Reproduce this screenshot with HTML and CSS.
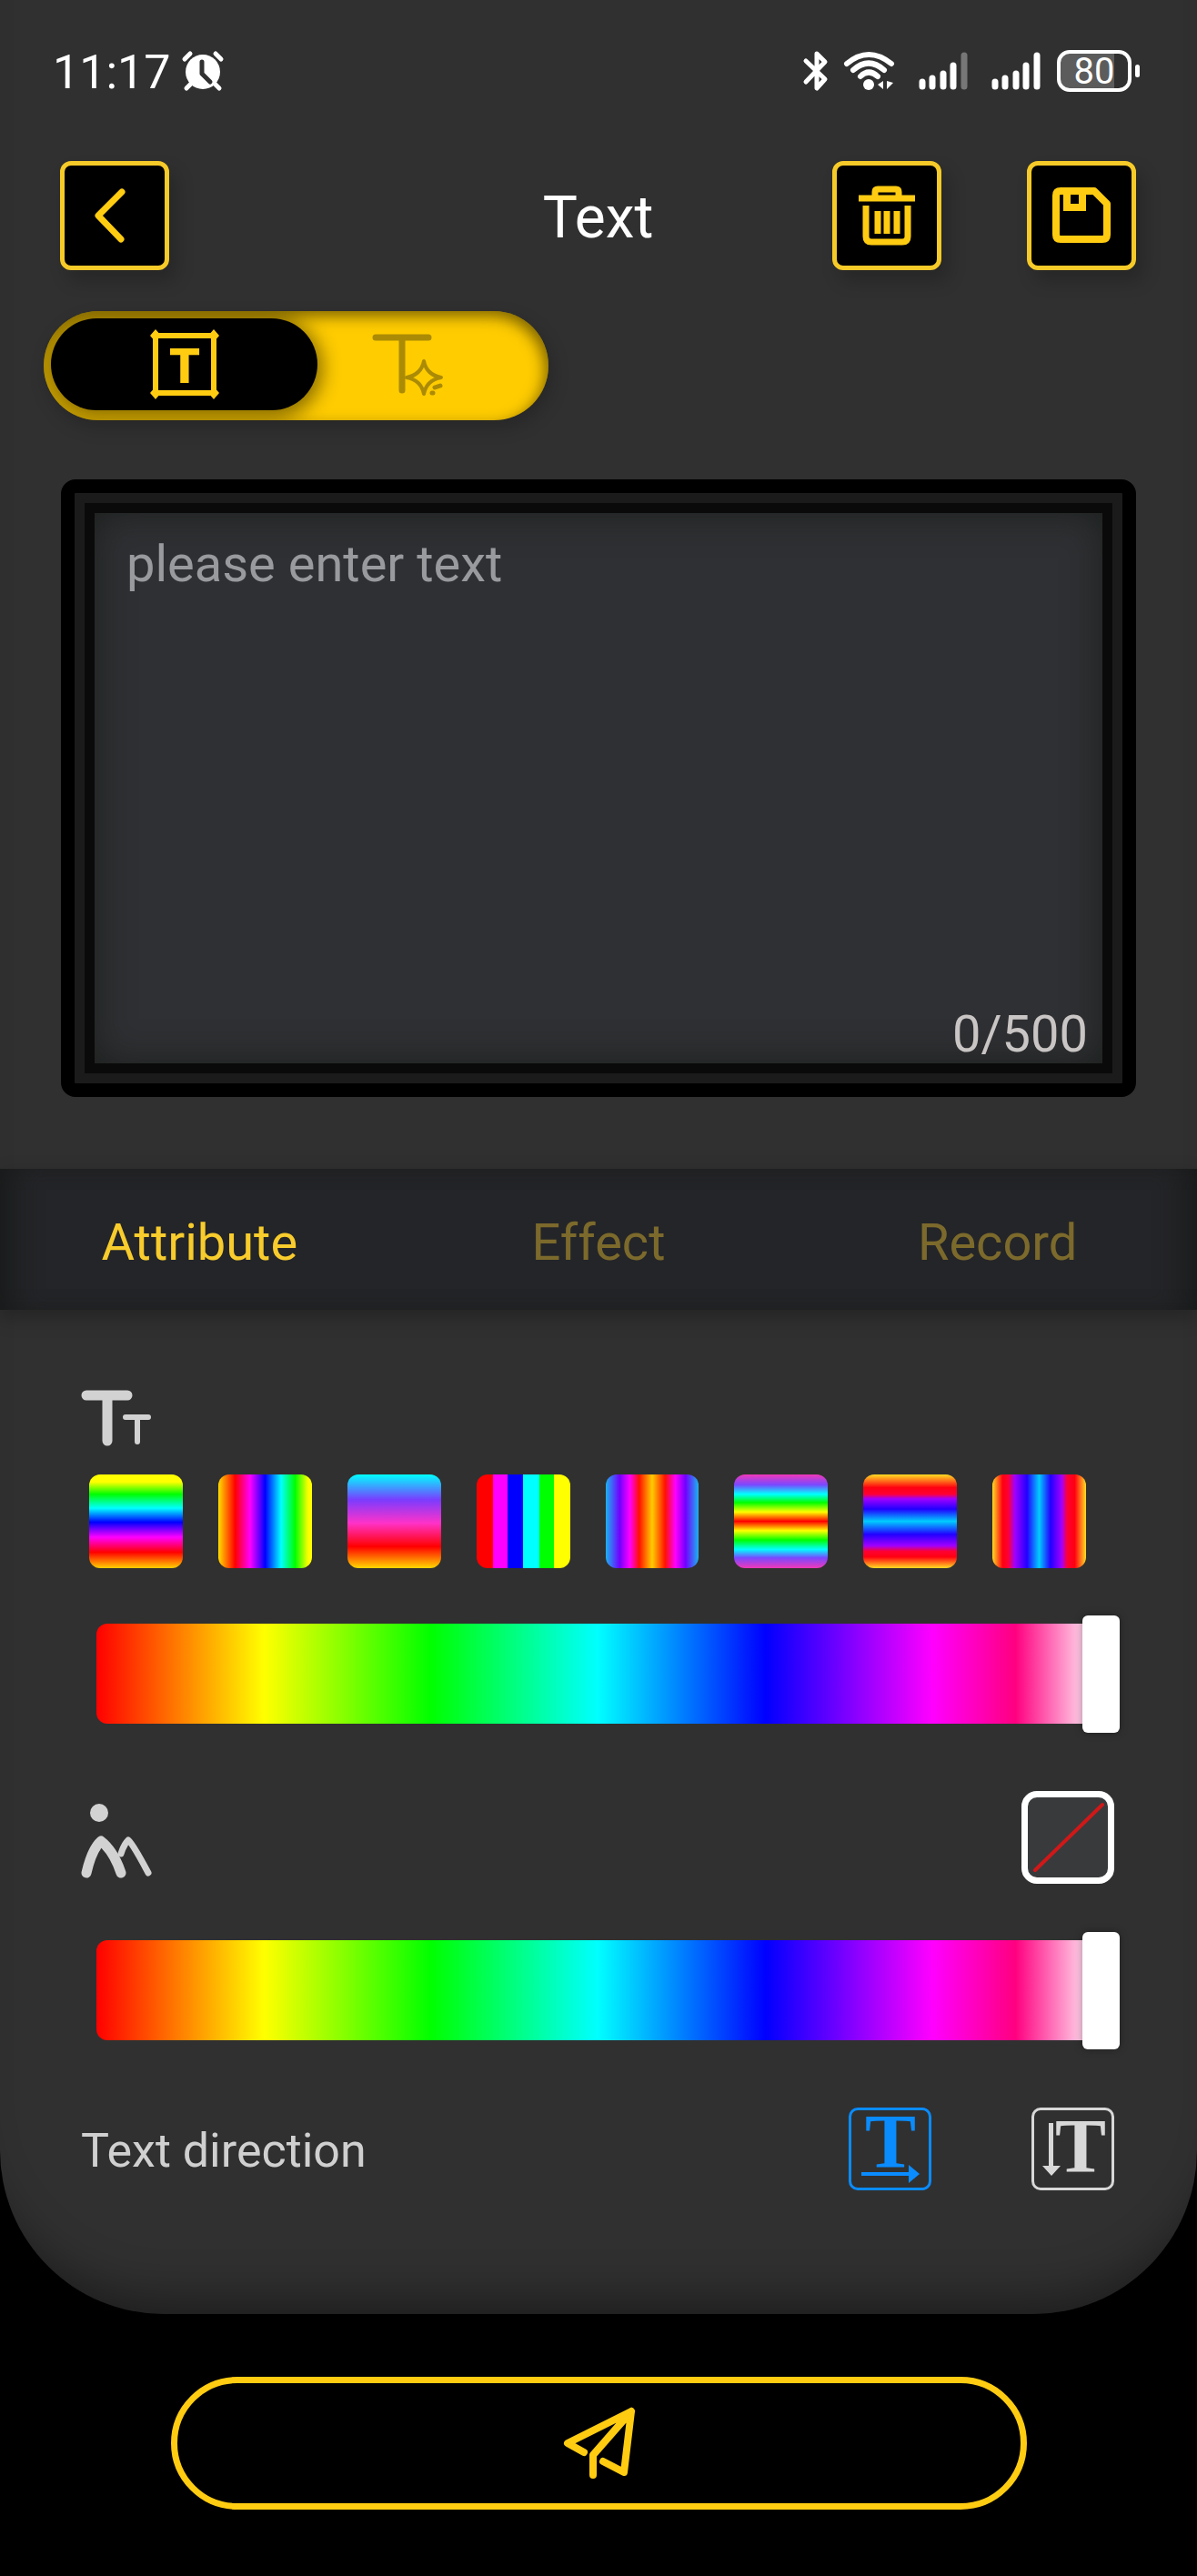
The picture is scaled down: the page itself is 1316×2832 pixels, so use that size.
FILE: index.html
```html
<!DOCTYPE html>
<html lang="en">
<head>
  <meta charset="UTF-8">
  <meta name="viewport" content="width=device-width, initial-scale=1">
  <title>Text</title>
  <link rel="stylesheet" href="styles.css">
</head>
<body>
  <main class="screen">
    <div class="status-bar">
      <div class="status-left">
        <span class="time">11:17</span>
        <svg width="46" height="44" viewBox="0 0 46 44">
          <circle cx="23" cy="23" r="19" fill="#fff"/>
          <path d="M3 9l6-6M43 9l-6-6M10 36l-5 5M36 36l5 5" stroke="#fff" stroke-width="5" stroke-linecap="round"/>
          <path d="M22 12v13l9 9" fill="none" stroke="#303030" stroke-width="5" stroke-linecap="round" stroke-linejoin="round"/>
        </svg>
      </div>
      <div class="status-right">
        <svg class="bluetooth" width="28" height="44" viewBox="0 0 28 44" fill="none" stroke="#fff" stroke-width="5" stroke-linecap="round" stroke-linejoin="round">
          <path d="M3 11l21 20-9 10V3l9 9L3 34"/>
        </svg>
        <svg class="wifi" width="56" height="44" viewBox="0 0 56 44" fill="none" stroke="#fff" stroke-width="6" stroke-linecap="round">
          <path d="M3 14Q27-6 52 14M10 21Q27 6 44 21M18 28Q27 19 37 28"/>
          <circle cx="27" cy="37" r="6" fill="#fff" stroke="none"/>
          <path d="M43 33v9l-6-5zM47 33v9l7-7z" fill="#fff" stroke="none"/>
        </svg>
        <svg class="signal" width="54" height="44" viewBox="0 0 54 44" stroke="#fff" stroke-width="7" stroke-linecap="round">
          <path d="M4 34v5M15 30v9M27 25v14M38 16v23"/>
          <path d="M50 5v34" stroke="#777"/>
        </svg>
        <svg class="signal" width="54" height="44" viewBox="0 0 54 44" stroke="#fff" stroke-width="7" stroke-linecap="round">
          <path d="M4 34v5M15 30v9M27 25v14M38 16v23M50 5v34"/>
        </svg>
        <div class="battery"><span>80</span></div>
      </div>
    </div>

    <header class="header">
      <button class="icon-btn" aria-label="Back">
        <svg width="112" height="112" viewBox="0 0 112 112" fill="none" stroke="#ffcc12" stroke-width="7" stroke-linecap="round" stroke-linejoin="round">
          <path d="M64 30L38 56l25 26"/>
        </svg>
      </button>
      <h1>Text</h1>
      <div class="header-actions">
        <button class="icon-btn" aria-label="Delete">
          <svg width="62" height="66" viewBox="0 0 62 66" fill="none" stroke="#ffcc12" stroke-width="7">
            <path d="M0 14h62M18 14V7q0-3 3-3h20q3 0 3 3v7M8 22v34q0 6 6 6h34q6 0 6-6V22M21 28v25M31 28v25M42 28v25"/>
          </svg>
        </button>
        <button class="icon-btn" aria-label="Save">
          <svg width="64" height="62" viewBox="0 0 64 62" fill="none" stroke="#ffcc12" stroke-width="8" stroke-linejoin="round">
            <path d="M9 4h37l14 14v34q0 5-5 5H9q-5 0-5-5V9q0-5 5-5z"/>
            <path d="M16 4v18h17V4" stroke-linejoin="miter"/>
          </svg>
        </button>
      </div>
    </header>

    <div class="mode-switch">
      <button class="mode active" aria-label="Plain text">
        <svg width="76" height="78" viewBox="0 0 76 78">
          <path d="M6 7h64v63H6z" fill="none" stroke="#ffcc12" stroke-width="6"/>
          <path d="M6 0l6 7-6 7-6-7zM70 0l6 7-6 7-6-7zM6 63l6 7-6 7-6-7zM70 63l6 7-6 7-6-7z" fill="#ffcc12"/>
          <text class="box-letter" x="38" y="59">T</text>
        </svg>
      </button>
      <button class="mode" aria-label="Art text">
        <svg width="80" height="72" viewBox="0 0 80 72" fill="none" stroke="#ab8b05" stroke-width="7" stroke-linecap="round" stroke-linejoin="round">
          <path d="M4 5h58M33 5v58"/>
          <path d="M57 31q3 15 19 18-16 3-19 18-3-15-19-18 16-3 19-18z" fill="#ffcc00" stroke-width="4"/>
          <path d="M69 60l6-2M66 66h1" stroke-width="5"/>
        </svg>
      </button>
    </div>

    <div class="editor">
      <textarea id="content" maxlength="500" placeholder="please enter text" aria-label="Text content"></textarea>
      <span class="counter">0/500</span>
    </div>

    <nav class="tabs">
      <button class="tab active">Attribute</button>
      <button class="tab">Effect</button>
      <button class="tab">Record</button>
    </nav>

    <section class="panel">
      <svg class="font-icon" width="78" height="62" viewBox="0 0 78 62" fill="none" stroke="#d2d2d2" stroke-linecap="round">
        <path d="M6 6h45M29 6v50" stroke-width="11"/>
        <path d="M49 30h25M62 30v27" stroke-width="6"/>
      </svg>

      <div class="swatches">
        <button class="swatch rainbow-down" aria-label="Rainbow down"></button>
        <button class="swatch rainbow-across" aria-label="Rainbow across"></button>
        <button class="swatch sunset" aria-label="Sunset"></button>
        <button class="swatch bars" aria-label="Colour bars"></button>
        <button class="swatch gold-centre" aria-label="Gold centre"></button>
        <button class="swatch red-centre" aria-label="Red centre"></button>
        <button class="swatch blue-down" aria-label="Blue centre down"></button>
        <button class="swatch blue-across" aria-label="Blue centre across"></button>
      </div>

      <input class="hue" type="range" min="0" max="100" value="100" aria-label="Text colour">

      <div class="row background-row">
        <svg width="78" height="94" viewBox="0 0 78 94" fill="none" stroke="#d2d2d2" stroke-linecap="round" stroke-linejoin="round">
          <circle cx="20" cy="20" r="10" fill="#d2d2d2" stroke="none"/>
          <path d="M6 86Q12 60 22 51 36 62 44 86" stroke-width="11"/>
          <path d="M44 65q3-10 8-15 5 4 22 36" stroke-width="7"/>
        </svg>
        <button class="no-color" aria-label="No background">
          <svg width="88" height="88" viewBox="0 0 88 88"><path d="M8 80L82 8" stroke="#d01818" stroke-width="4" stroke-linecap="round"/></svg>
        </button>
      </div>

      <input class="hue" type="range" min="0" max="100" value="100" aria-label="Background colour">

      <div class="row direction-row">
        <span class="label">Text direction</span>
        <div class="directions">
          <button class="direction active" aria-label="Horizontal">
            <svg width="91" height="91" viewBox="0 0 91 91" fill="currentColor">
              <text class="serif-letter" x="46" y="66">T</text>
              <path d="M14 71h52v-8l12 10-12 10v-8H14z"/>
            </svg>
          </button>
          <button class="direction" aria-label="Vertical">
            <svg width="91" height="91" viewBox="0 0 91 91" fill="currentColor">
              <text class="serif-letter" x="54" y="71">T</text>
              <path d="M19 17h5v47h8L22 75 12 64h7z"/>
            </svg>
          </button>
        </div>
      </div>
    </section>
  </main>

  <footer class="footer">
    <button class="send" aria-label="Send">
      <svg width="80" height="80" viewBox="0 0 80 80" fill="none" stroke="#ffcc12" stroke-width="8" stroke-linecap="round" stroke-linejoin="round">
        <path d="M23 50L5 40 75 5l-8 67-23-12M75 5L33 53v22"/>
      </svg>
    </button>
  </footer>
</body>
</html>
```
FILE: styles.css
```css
*{box-sizing:border-box;}
body{margin:0;min-height:100vh;background:#000;color:#fff;font-family:Roboto,"Noto Sans",sans-serif;}
button{margin:0;padding:0;border:none;background:none;font:inherit;cursor:pointer;}
svg{display:block;overflow:visible;}

.screen{
  background:#303030;
  border-radius:0 0 180px 180px;
  box-shadow:inset 0 -56px 50px -40px rgba(0,0,0,0.4);
  overflow:hidden;
}

/* status bar */
.status-bar{display:flex;justify-content:space-between;align-items:center;height:46px;margin:55px 63px 76px 58px;}
.status-left,.status-right{display:flex;align-items:center;}
.status-left{gap:12px;}
.time{padding-top:4px;font-size:52px;line-height:46px;}
.wifi{margin-left:17px;}
.signal{margin-left:26px;}
.battery{
  position:relative;
  width:82px;
  height:46px;
  margin:0 9px 0 18px;
  border:4px solid #fff;
  border-radius:14px;
  background:linear-gradient(90deg,#5c5c5c 80%,#303030 80%);
  font-size:40px;
  line-height:40px;
  text-align:center;
}
.battery::after{content:"";position:absolute;right:-13px;top:12px;width:5px;height:14px;border-radius:3px;background:#fff;}

/* header */
.header{display:grid;grid-template-columns:1fr auto 1fr;align-items:center;margin:0 67px 0 66px;}
.header h1{margin:0;padding-top:6px;font-size:64px;font-weight:400;line-height:72px;}
.header-actions{display:flex;justify-content:flex-end;gap:94px;}
.icon-btn{
  display:flex;
  align-items:center;
  justify-content:center;
  width:120px;
  height:120px;
  border:5px solid #f6ca28;
  border-radius:12px;
  background:#000;
  box-shadow:8px 12px 20px rgba(0,0,0,0.2);
}

.mode-switch{
  display:flex;
  width:555px;
  height:120px;
  margin:45px 48px 65px;
  padding:8px;
  border-radius:60px;
  background:#ffcc00;
  box-shadow:inset -4px 6px 16px rgba(0,0,0,0.5),4px 8px 20px rgba(0,0,0,0.2);
  overflow:hidden;
}
.mode{display:flex;align-items:center;justify-content:center;width:200px;}
.mode.active{width:293px;height:101px;border-radius:51px;background:#000;box-shadow:0 4px 20px 6px rgba(0,0,0,0.45);}
.box-letter{fill:#ffcc12;font-size:54px;font-weight:900;text-anchor:middle;}

/* editor */
.editor{
  position:relative;
  margin:0 67px;
  border:15px solid #000;
  border-radius:16px;
  background:#1b1b1b;
  padding:11px;
}
.editor textarea{
  display:block;
  width:100%;
  height:627px;
  padding:20px 35px;
  border:11px solid #0a0a0a;
  background:#2f3033;
  box-shadow:inset 0 0 40px rgba(20,24,20,0.7);
  color:#fff;
  font:56px/72px Roboto,"Noto Sans",sans-serif;
  resize:none;
  outline:none;
}
.editor textarea::placeholder{color:#999a9d;opacity:1;}
.counter{position:absolute;right:38px;bottom:22px;color:#c9c5c4;font-size:56px;line-height:64px;}

/* tabs */
.tabs{
  display:grid;
  grid-template-columns:repeat(3, 1fr);
  margin-top:79px;
  background:#242528;
  box-shadow:inset 28px 0 32px -16px #181a1a,inset -28px 0 32px -16px #181a1a,0 8px 20px rgba(0,0,0,0.25);
}
.tab{height:155px;padding-top:6px;color:#7c6a2c;font-size:56px;line-height:72px;}
.tab.active{color:#f8cc2c;}

/* attribute panel */
.panel{padding:88px 91px 136px 89px;}
.row{display:flex;align-items:center;justify-content:space-between;}
.swatches{display:grid;grid-template-columns:repeat(8, 1fr);gap:39px;margin:31px 31px 52px 9px;}
.swatch{aspect-ratio:1;border-radius:12px;}
.rainbow-down{background:linear-gradient(#ff0 8%,#0f0 21%,#0ff 36%,#00f 51%,#f0f 67%,#f00 83%,#ffd000);}
.rainbow-across{background:linear-gradient(90deg,#fd0,#f00 18%,#f0f 34%,#00f 50%,#0ff 67%,#0f0 82%,#ff0 96%);}
.sunset{background:linear-gradient(#0ff,#7a3cff 27%,#ff32c8 52%,#f00 77%,#ffd800);}
.bars{background:linear-gradient(90deg,#f00 17%,#f0f 17% 33%,#00f 33% 50%,#0ff 50% 67%,#0f0 67% 83%,#ff0 83%);}
.gold-centre{background:linear-gradient(90deg,#1ab4f0,#7000ff 15%,#f0f 26%,#f10 36%,#fc0 50%,#f10 64%,#f0f 75%,#7000ff 86%,#1ab4f0);}
.red-centre{background:linear-gradient(#f038b8,#7a48ff 11%,#0ff 21%,#0f0 30%,#ff0 40%,#f00 50%,#ff0 60%,#0f0 70%,#0ff 80%,#7a48ff 89%,#f038b8);}
.blue-down{background:linear-gradient(#fd2,#f01 14%,#f03 21%,#a000ff 26%,#20f 37%,#0cf 50%,#20f 64%,#a000ff 76%,#f03 82%,#f01 88%,#fd2);}
.blue-across{background:linear-gradient(90deg,#fd2,#f01 11%,#f03 17%,#a000ff 24%,#20f 37%,#0cf 50%,#20f 62%,#a000ff 74%,#f03 80%,#f01 88%,#fd2);}

.hue{
  -webkit-appearance:none;
  appearance:none;
  display:block;
  width:calc(100% - 11px);
  height:129px;
  margin:0 0 0 17px;
  background:none;
}
.hue::-webkit-slider-runnable-track{
  height:110px;
  border-radius:12px;
  background:linear-gradient(90deg,#f00,#ff0 16.4%,#0f0 32.7%,#0ff 49%,#00f 65.4%,#f0f 81.7%,#ff0080 89.8%,#fff 98%);
}
.hue::-webkit-slider-thumb{
  -webkit-appearance:none;
  width:41px;
  height:129px;
  margin-top:-9px;
  border-radius:6px;
  background:#fff;
  box-shadow:0 0 8px rgba(0,0,0,0.35);
}

.background-row{margin:64px 0 53px;}
.no-color{width:102px;height:102px;border:7px solid #fff;border-radius:17px;background:#393a3c;}
.direction-row{margin-top:64px;}
.label{padding-top:6px;color:#d0d0d0;font-size:52px;line-height:64px;}
.directions{display:flex;gap:110px;}
.direction{display:flex;align-items:center;justify-content:center;width:91px;height:91px;border:3px solid;border-radius:10px;color:#d8d8d8;}
.direction svg{flex:none;}
.direction.active{color:#0a8cff;}
.serif-letter{font-family:"Liberation Serif",serif;font-size:84px;font-weight:bold;text-anchor:middle;}

/* send bar */
.footer{padding:69px 187px 73px 188px;}
.send{
  display:flex;
  align-items:center;
  justify-content:center;
  width:100%;
  height:146px;
  border:7px solid #ffcc12;
  border-radius:73px;
}
```
